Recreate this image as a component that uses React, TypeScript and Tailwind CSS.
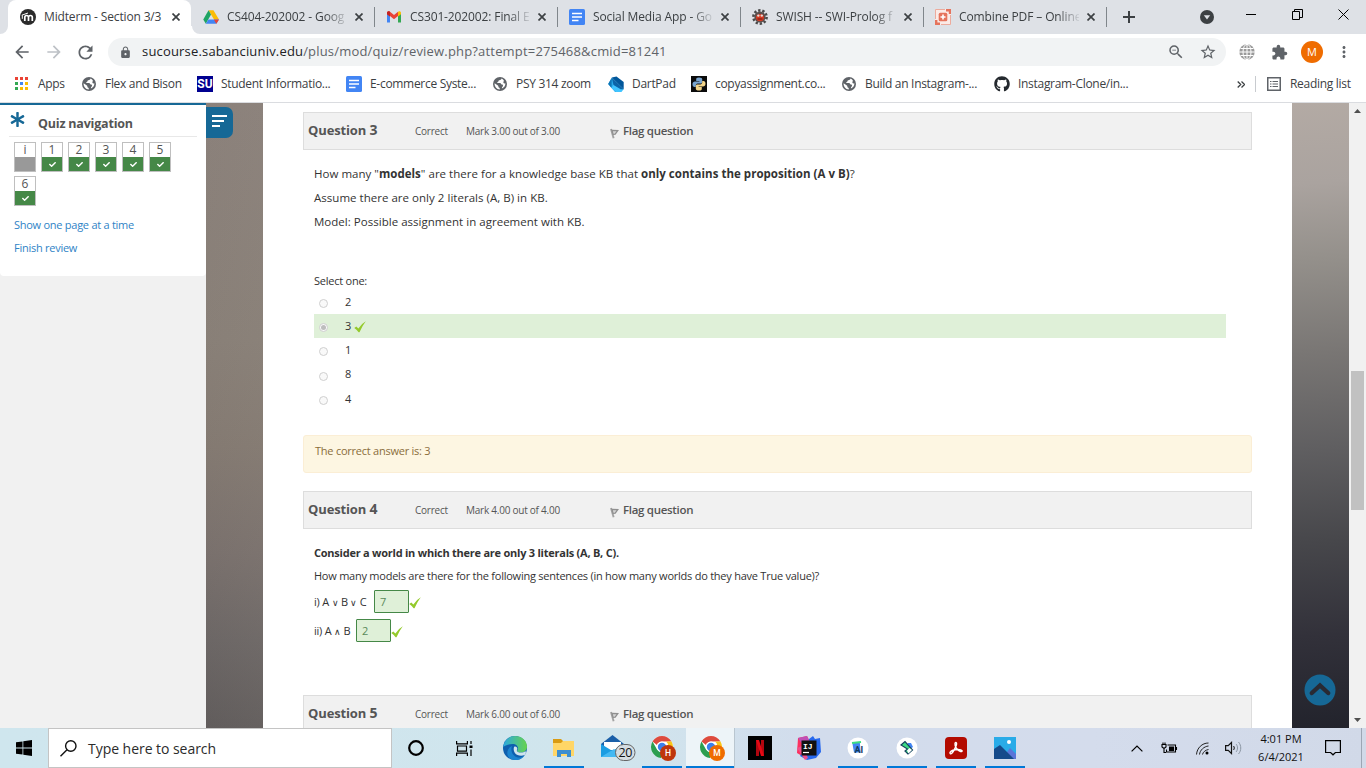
import React from "react";
import { FaAsterisk, FaGithub, FaCheck } from "react-icons/fa";
import { MdExtension, MdLock, MdStarBorder, MdMoreVert, MdRefresh, MdArrowBack, MdArrowForward, MdZoomOut } from "react-icons/md";

type Kids = { children?: React.ReactNode };

/* ---------- small drawings ---------- */

function Moodle() {
  return (
    <svg width="16" height="16" viewBox="0 0 16 16">
      <circle cx="8" cy="8" r="8" fill="#2b2b2b" />
      <path d="M4.800 12V8.200c0-2.300 3.700-2.300 3.700 0V12M8.500 8.200c0-2.300 3.800-2.300 3.800 0V12" fill="none" stroke="#fff" strokeWidth="1.700" />
      <path d="M1.800 6.200L8 4M2.300 6.200v3.600" fill="none" stroke="#fff" strokeWidth="1" />
    </svg>
  );
}

function Drive() {
  return (
    <svg width="16" height="16" viewBox="0 0 24 24">
      <path d="M8.3 1.8h7.4L24 15.6h-7.5z" fill="#fbbc04" />
      <path d="M8.3 1.8L12 8.2 4.2 22 .4 15.6z" fill="#1fa463" />
      <path d="M8.1 15.6H24L20 22H4.2z" fill="#4285f4" />
      <path d="M16.4 15.6H24L20 22z" fill="#ea4335" />
    </svg>
  );
}

function Gmail() {
  return (
    <svg width="16" height="16" viewBox="0 0 16 16">
      <path d="M1 4v9.5h3V7z" fill="#4285f4" />
      <path d="M12 7v6.5h3V4z" fill="#34a853" />
      <path d="M1 3.8C1 2.2 3 1.8 4 2.8L8 6l4-3.2V7l-4 3.2L4 7v.5L1 5.3z" fill="#ea4335" />
      <path d="M12 2.8c1-1 3-.6 3 1v1.5L12 7.5z" fill="#fbbc04" />
      <path d="M1 3.8C1 2.4 3 1.9 4 2.8v4.7L1 5.3z" fill="#c5221f" />
    </svg>
  );
}

function Docs() {
  return (
    <svg width="16" height="16" viewBox="0 0 16 16">
      <rect width="16" height="16" rx="1.5" fill="#4285f4" />
      <path d="M3 4.5h10M3 8h10M3 11.5h6.5" stroke="#fff" strokeWidth="1.6" />
    </svg>
  );
}

function Swish() {
  return (
    <svg width="16" height="16" viewBox="0 0 16 16">
      <circle cx="8" cy="8" r="6.6" fill="none" stroke="#4a4a4a" strokeWidth="2.6" strokeDasharray="2.3 1.85" />
      <circle cx="8" cy="8" r="5.6" fill="#5b4f4d" />
      <ellipse cx="8" cy="8.6" rx="4" ry="3.6" fill="#d63a22" />
      <circle cx="6.3" cy="6.6" r="1.2" fill="#e8dcd8" />
      <circle cx="9.8" cy="6.6" r="1.2" fill="#e8dcd8" />
      <path d="M5.5 10h5" stroke="#701810" strokeWidth="1" />
    </svg>
  );
}

function Combine() {
  return (
    <svg width="16" height="16" viewBox="0 0 16 16">
      <rect width="16" height="16" fill="#fbeae6" />
      <path d="M11 0h5v5h-2.200V2.400H11zM0 11h2.400v2.600H5V16H0z" fill="#e5735c" />
      <path d="M.5 10V.5H10M6 15.500h9.500V6" fill="none" stroke="#ecab9d" />
      <rect x="3.700" y="3.700" width="8.600" height="8.600" rx="1.500" fill="#e5735c" />
      <path d="M8 5.500v5M5.500 8h5" stroke="#fff" strokeWidth="1.600" />
    </svg>
  );
}

function Globe() {
  return (
    <svg width="14" height="14" viewBox="0 0 14 14">
      <circle cx="7" cy="7" r="7" fill="#5f6368" />
      <path d="M8.600 1.600C8.300 3 7.300 3.200 6.300 3.300c-1.100.2-.6 1.600-1.700 1.800-.7.200-.5 1 .1 1h2.400c1 0 .8 1.400 1.700 1.400.8 0 1.300.4 1.200 1.200-.1.800-.8 1.100-1 1.800l-.1.900a5.500 5.500 0 0 0 3.500-5.200c-.9.400-1.800.1-2-.7-.2-.7.100-1.300.7-1.600a5.500 5.500 0 0 0-2.500-2.300zM1.600 6.200c-.3 3.200 2 6.100 5.200 6.200 0-1.200-.2-1.400-.9-1.800-.7-.5-.3-1.500-1-2.100z" fill="#fff" />
    </svg>
  );
}

function AppsGrid() {
  const dots = ["#ea4335", "#ea4335", "#ea4335", "#34a853", "#4285f4", "#fbbc04", "#34a853", "#fbbc04", "#fbbc04"];
  return (
    <svg width="14" height="14" viewBox="0 0 14 14">
      {dots.map((c, i) => (
        <rect key={i} x={(i % 3) * 5} y={Math.floor(i / 3) * 5} width="3" height="3" fill={c} />
      ))}
    </svg>
  );
}

function Dart() {
  return (
    <svg width="16" height="16" viewBox="0 0 16 16">
      <path d="M.2 8L3.800 2 15.500 13l-3.500 3H7z" fill="#29a8e8" />
      <path d="M3.800 1.500L8.500.4 15.700 6v7.200z" fill="#01579b" />
      <path d="M3.800 1.500L.2 8l3.300 4z" fill="#0d74b5" />
      <path d="M3.500 12L6 8l9.500 5.200L13.500 16H8z" fill="#40c4ff" />
      <path d="M3.800 1.500l11.900 11.700h-3L5.500 9z" fill="#0b64a8" />
    </svg>
  );
}

function Python() {
  return (
    <svg width="16" height="16" viewBox="0 0 16 16">
      <rect width="16" height="16" fill="#0b0b0b" />
      <path d="M8 1.500c-2.500 0-2.800.9-2.800 1.800V5h3.200v.6H4C2.500 5.600 1.500 6.600 1.500 8.300s.8 2.700 2 2.700h1.300V9.400c0-1 .8-1.900 1.900-1.900h3c.9 0 1.500-.7 1.500-1.500V3.300c0-1-1-1.800-3.200-1.800z" fill="#7aa5cf" />
      <path d="M8 14.500c2.500 0 2.800-.9 2.800-1.800V11H7.600v-.6H12c1.500 0 2.500-1 2.500-2.700S13.700 5 12.500 5h-1.300v1.600c0 1-.8 1.900-1.900 1.900h-3c-.9 0-1.500.7-1.500 1.500v2.700c0 1 1 1.800 3.200 1.800z" fill="#f3d58a" />
    </svg>
  );
}

function Web() {
  return (
    <svg width="16" height="16" viewBox="0 0 16 16" fill="none" stroke="#fff" strokeWidth="1">
      <circle cx="8" cy="8" r="7.700" fill="#9a9a9a" stroke="none" />
      <path d="M8 0v16M0 8h16M1.500 4.500h13M1.500 11.500h13" />
      <ellipse cx="8" cy="8" rx="4" ry="7.700" />
    </svg>
  );
}

function GreenTick() {
  return (
    <svg width="12" height="12" viewBox="0 0 12 12" className="shrink-0">
      <path d="M.3 7l2-1.600 2.100 2.200Q7 3 11.800.3 8.200 5 5.500 11.300H4.600Q3 8.800.3 7z" fill="#94ca2c" />
    </svg>
  );
}

function Flag() {
  return (
    <svg width="9" height="11" viewBox="0 0 9 11" className="shrink-0">
      <path d="M1 1l2.600 9.300" stroke="#a3a3a3" strokeWidth="1.900" />
      <path d="M2 2.300l5.800.2-2.600 3.700-2.200.2z" fill="#d5d5d5" stroke="#8f8f8f" strokeWidth="1.300" />
    </svg>
  );
}

/* ---------- browser chrome ---------- */

const CloseX = () => (
  <svg width="8" height="8" viewBox="0 0 8 8" className="shrink-0">
    <path d="M.5.5l7 7M7.500.5l-7 7" stroke="#3c4043" strokeWidth="1.700" />
  </svg>
);

function ActiveTab({ icon, children }: Kids & { icon: React.ReactNode }) {
  return (
    <div className="relative flex h-[34px] w-[183px] shrink-0 items-center rounded-t-[8px] bg-white pl-3">
      <svg width="8" height="8" viewBox="0 0 8 8" className="absolute bottom-0 -left-2"><path d="M8 0v8H0a8 8 0 0 0 8-8z" fill="#fff" /></svg>
      <svg width="9" height="8" viewBox="0 0 9 8" className="absolute -right-[9px] bottom-0"><path d="M0 0v8h9a8 8 0 0 1-8-8z" fill="#fff" /></svg>
      <span className="flex w-4 shrink-0 justify-center">{icon}</span>
      <span className="ml-2 w-[120px] shrink-0 whitespace-nowrap tracking-[-0.15px]">{children}</span>
      <span className="ml-2"><CloseX /></span>
    </div>
  );
}

function Tab({ icon, children }: Kids & { icon: React.ReactNode }) {
  return (
    <div className="flex h-[34px] w-[183px] shrink-0 items-center pl-3">
      <span className="flex w-4 shrink-0 justify-center">{icon}</span>
      <span className="ml-2 w-[120px] shrink-0 whitespace-nowrap tracking-[-0.12px] mask-[linear-gradient(90deg,#000_82%,transparent_102%)]">{children}</span>
      <span className="ml-2"><CloseX /></span>
      <span className="-mr-px ml-auto h-5 w-px bg-[#80868b]" />
    </div>
  );
}

function TabStrip() {
  return (
    <div className="flex h-[34px] bg-[#dee1e6] pl-2 text-[12px] text-[#3c4043]">
      <ActiveTab icon={<Moodle />}>Midterm - Section 3/3</ActiveTab>
      <Tab icon={<Drive />}>CS404-202002 - Goog</Tab>
      <Tab icon={<Gmail />}>CS301-202002: Final E</Tab>
      <Tab icon={<Docs />}>Social Media App - Go</Tab>
      <Tab icon={<Swish />}>SWISH -- SWI-Prolog f</Tab>
      <Tab icon={<Combine />}>Combine PDF – Online</Tab>
      <div className="flex flex-1 items-center">
        <svg width="12" height="12" viewBox="0 0 12 12" className="ml-[17px]"><path d="M6 0v12M0 6h12" stroke="#3c4043" strokeWidth="2" /></svg>
        <svg width="14" height="14" viewBox="0 0 14 14" className="ml-[65px]"><circle cx="7" cy="7" r="7" fill="#3c4043" /><path d="M3.800 5.300h6.400L7 9.500z" fill="#dee1e6" /></svg>
        <svg width="10" height="10" viewBox="0 0 10 10" className="-mt-[6px] ml-[32px]"><path d="M0 5.500h10" stroke="#000" /></svg>
        <svg width="11" height="11" viewBox="0 0 11 11" className="-mt-[6px] ml-[36px]" fill="none" stroke="#000"><path d="M.5 2.500h7v8h-7zM2.500 2.500v-2h8v8h-3" /></svg>
        <svg width="11" height="11" viewBox="0 0 11 11" className="-mt-[6px] ml-[35px]"><path d="M.5.5l10 10M10.500.5l-10 10" stroke="#000" /></svg>
      </div>
    </div>
  );
}

function Toolbar() {
  return (
    <div className="flex h-9 items-center bg-white text-[#5f6368]">
      <MdArrowBack size={20} className="ml-3" />
      <MdArrowForward size={20} className="ml-3 text-[#bdc1c6]" />
      <MdRefresh size={21} className="ml-[11px]" />
      <div className="ml-3 flex h-7 w-[1118px] items-center rounded-full bg-[#f1f3f4]">
        <MdLock size={13} className="ml-[11px] shrink-0" />
        <span className="ml-[10px] whitespace-nowrap text-[13px] tracking-[0.18px]"><span className="text-[#202124]">sucourse.sabanciuniv.edu</span>/plus/mod/quiz/review.php?attempt=275468&amp;cmid=81241</span>
        <MdZoomOut size={18} className="mr-[14px] ml-auto" />
        <MdStarBorder size={18} className="mr-[9px]" />
      </div>
      <div className="flex flex-1 items-center">
        <span className="ml-[13px]"><Web /></span>
        <MdExtension size={17} className="ml-4" />
        <span className="ml-[13px] flex size-[22px] items-center justify-center rounded-full bg-[#ef6c00] text-[11px] text-white">M</span>
        <MdMoreVert size={18} className="ml-[12px]" />
      </div>
    </div>
  );
}

function Mark({ icon, children, w }: Kids & { icon: React.ReactNode; w: string }) {
  return (
    <div className={"flex shrink-0 items-center whitespace-nowrap " + w}>
      <span className="mr-2 flex w-4 shrink-0 justify-center">{icon}</span>
      <span>{children}</span>
    </div>
  );
}

function Bookmarks() {
  return (
    <div className="flex h-[33px] items-center border-b border-[#dadce0] bg-white pb-1 pl-[14px] text-[12px] tracking-[-0.3px] text-[#3c4043]">
      <Mark w="w-[67px]" icon={<AppsGrid />}>Apps</Mark>
      <Mark w="w-[116px]" icon={<Globe />}>Flex and Bison</Mark>
      <Mark w="w-[149px]" icon={<span className="flex size-4 items-center justify-center bg-[#000090] font-['Roboto',sans-serif] text-[12px] font-bold tracking-normal text-white">SU</span>}>Student Informatio...</Mark>
      <Mark w="w-[146px]" icon={<Docs />}>E-commerce Syste...</Mark>
      <Mark w="w-[116px]" icon={<Globe />}>PSY 314 zoom</Mark>
      <Mark w="w-[83px]" icon={<Dart />}>DartPad</Mark>
      <Mark w="w-[150px]" icon={<Python />}>copyassignment.co...</Mark>
      <Mark w="w-[153px]" icon={<Globe />}>Build an Instagram-...</Mark>
      <Mark w="w-[243px]" icon={<FaGithub size={16} color="#24292e" />}>Instagram-Clone/in...</Mark>
      <svg width="8" height="7" viewBox="0 0 8 7"><path d="M.7.5l3 3-3 3M4.500.5l3 3-3 3" fill="none" stroke="#3c4043" strokeWidth="1.300" /></svg>
      <span className="ml-[10px] h-4 w-px bg-[#c8cbcf]" />
      <svg width="14" height="14" viewBox="0 0 14 14" className="mr-[9px] ml-[11px]" fill="none" stroke="#5f6368"><path d="M.75.75h12.500v12.500H.75z" strokeWidth="1.500" /><path d="M3 4.500h1.500M5.500 4.500H11M3 7h1.500M5.500 7H11M3 9.500h1.500M5.500 9.500H11" strokeWidth="1.200" /></svg>
      <span className="whitespace-nowrap">Reading list</span>
    </div>
  );
}

/* ---------- quiz page ---------- */

function NavButton({ n, done }: { n: string; done?: boolean }) {
  return (
    <div className="flex h-[30px] w-[22px] flex-col border border-[#bfbfbf] bg-white text-center text-[12px] leading-[14px] text-[#555]">
      <span className="h-[14px]">{n}</span>
      <span className={done ? "flex h-[14px] items-center justify-center bg-[#458847] text-white" : "h-[14px] bg-[#999]"}>{done && <FaCheck size={7} />}</span>
    </div>
  );
}

function Sidebar() {
  return (
    <aside className="flex w-[206px] shrink-0 flex-col bg-[#f1f1f1]">
      <div className="h-[173px] rounded-b border-t-2 border-[#166896] bg-white px-[9px]">
        <div className="flex h-8 items-center border-b border-[#e8e8e8]">
          <FaAsterisk size={15} color="#166896" className="mb-0.5 ml-px" />
          <h2 className="ml-[13px] whitespace-nowrap pt-[7px] text-[12.500px] font-bold tracking-[-0.2px] text-[#555]">Quiz navigation</h2>
        </div>
        <div className="flex w-[180px] flex-wrap gap-x-[5px] gap-y-1 pt-[5px] pl-[5px]">
          <NavButton n="i" />
          {["1", "2", "3", "4", "5", "6"].map((n) => <NavButton key={n} n={n} done />)}
        </div>
        <div className="flex flex-col pt-[7px] pl-[5px] text-[11px] leading-[23px] tracking-[-0.26px] text-[#2f83c6]">
          <a>Show one page at a time</a>
          <a>Finish review</a>
        </div>
      </div>
    </aside>
  );
}

function QHead({ n, mark }: { n: string; mark: string }) {
  return (
    <div className="-ml-[11px] flex h-[38px] w-[949px] shrink-0 items-center whitespace-nowrap border border-[#ddd] bg-[#f1f1f1] pl-1 text-[#555]">
      <h3 className="w-[107px] pb-[2px] text-[13px] font-bold tracking-[-0.13px]">Question <span className="text-[14px]">{n}</span></h3>
      <span className="w-[51px] pt-px text-[10px]">Correct</span>
      <span className="w-[144px] pt-px text-[10px]">Mark {mark} out of {mark}</span>
      <span className="pt-[4px]"><Flag /></span>
      <span className="ml-1 text-[11.500px] font-semibold tracking-[-0.3px]">Flag question</span>
    </div>
  );
}

function Option({ v, on }: { v: string; on?: boolean }) {
  return (
    <div className={on ? "flex h-[24px] w-[912px] items-center bg-[#dff0d8] pl-[5px]" : "flex h-[24.300px] w-[912px] items-center pl-[5px]"}>
      <span className="mt-[3px] flex size-[9px] items-center justify-center rounded-full border border-[#cfcfcf] bg-[#f9f9f9]">{on && <span className="size-[5px] rounded-full bg-[#bdbdbd]" />}</span>
      <span className="mr-[3px] ml-[17px]">{v}</span>
      {on && <span className="pt-0.5"><GreenTick /></span>}
    </div>
  );
}

function Blank({ children, v, w }: Kids & { v: string; w: string }) {
  return (
    <div className="flex h-[29px] items-center">
      <span className={"shrink-0 whitespace-nowrap " + w}>{children}</span>
      <span className="flex h-[23px] w-[35px] items-center rounded-[1px] border border-[#458847] bg-[#dff0d8] pl-[5px] text-[#5a8a5a]">{v}</span>
      <span className="pt-0.5"><GreenTick /></span>
    </div>
  );
}

const Op = ({ children }: Kids) => <span className="text-[9px]">{children}</span>;

function Quiz() {
  return (
    <main className="flex w-[1029px] shrink-0 flex-col overflow-hidden bg-white pt-[9px] pl-[51px] text-[11px] tracking-[-0.24px] text-[#333]">
      <QHead n="3" mark="3.00" />
      <div className="h-[108px] shrink-0 pt-[12px] text-[11.500px] leading-[24px] tracking-[0.025px]">
        <p>How many "<b>models</b>" are there for a knowledge base KB that <b>only contains the proposition (A v B)</b>?</p>
        <p>Assume there are only 2 literals (A, B) in KB.</p>
        <p>Model: Possible assignment in agreement with KB.</p>
      </div>
      <div className="flex h-[177px] shrink-0 flex-col pt-[13px]">
        <p className="h-[19px] leading-[20px]">Select one:</p>
        <Option v="2" />
        <Option v="3" on />
        <Option v="1" />
        <Option v="8" />
        <Option v="4" />
      </div>
      <div className="-ml-[11px] h-[38px] w-[949px] shrink-0 rounded-[3px] border border-[#fbeed5] bg-[#fdf6e2] pt-[7px] pl-[11px] text-[#8a6d3b]">The correct answer is: 3</div>
      <div className="h-[18px] shrink-0" />
      <QHead n="4" mark="4.00" />
      <div className="h-[166px] shrink-0 pt-[12px] leading-[23px]">
        <p className="font-bold">Consider a world in which there are only 3 literals (A, B, C).</p>
        <p>How many models are there for the following sentences (in how many worlds do they have True value)?</p>
        <Blank w="w-[60px]" v="7">i) A <Op>∨</Op> B <Op>∨</Op> C</Blank>
        <Blank w="w-[42px]" v="2">ii) A <Op>∧</Op> B</Blank>
      </div>
      <QHead n="5" mark="6.00" />
    </main>
  );
}

function Page() {
  return (
    <div className="flex h-[625px] overflow-hidden">
      <Sidebar />
      <div className="w-[57px] shrink-0 bg-[linear-gradient(100deg,transparent,#a59d9230),linear-gradient(180deg,#8b817b,#877e76_38%,#81776f_55%,#756c69_72%,#656060_86%,#575354)] pt-1">
        <div className="flex h-[31px] w-[27px] flex-col gap-[2px] rounded-r-[7px] bg-[#166896] pt-[8px] pl-[6px]">
          <span className="h-[2px] w-[15px] bg-white" />
          <span className="mt-px h-[2px] w-[12px] bg-white" />
          <span className="mt-px h-[2px] w-[8px] bg-white" />
        </div>
      </div>
      <Quiz />
      <div className="flex w-[57px] shrink-0 flex-col items-center justify-end bg-[linear-gradient(176deg,#b3aaa4,#aaa39f_13%,#94908b_25%,#797674_40%,#605f61_55%,#47474b_70%,#32313a_85%,#22232c)] pr-px pb-[22px]">
        <svg width="32" height="32" viewBox="0 0 32 32"><circle cx="16" cy="16" r="15.500" fill="#166896" /><path d="M7.800 19L16 11.500l8.200 7.500" fill="none" stroke="#292a33" strokeWidth="4.400" strokeLinejoin="miter" strokeLinecap="round" /></svg>
      </div>
      <div className="flex w-[17px] shrink-0 flex-col items-center bg-[#f1f1f1] pt-[6px] pb-[6px]">
        <svg width="7" height="4" viewBox="0 0 7 4"><path d="M3.500 0L7 4H0z" fill="#505050" /></svg>
        <div className="mt-[258px] h-[139px] w-[13px] bg-[#c1c1c1]" />
        <svg width="7" height="4" viewBox="0 0 7 4" className="mt-auto"><path d="M3.500 4L0 0h7z" fill="#505050" /></svg>
      </div>
    </div>
  );
}

/* ---------- taskbar ---------- */

function Chrome({ letter, color }: { letter: string; color: string }) {
  return (
    <svg width="26" height="26" viewBox="0 0 26 26">
      <circle cx="12" cy="12" r="11" fill="#fff" />
      <path d="M2.500 6.500A11 11 0 0 1 21.500 6.500H12a5.500 5.500 0 0 0-5 3.500z" fill="#dd4b3e" />
      <path d="M2.500 6.500A11 11 0 0 0 11 23l5-8a5.500 5.500 0 0 1-9-.5z" fill="#2c9e50" />
      <path d="M21.500 6.500A11 11 0 0 1 11 23l5.500-8a5.500 5.500 0 0 0-.5-8.500z" fill="#f9c61a" />
      <circle cx="12" cy="12" r="5.400" fill="#fff" />
      <circle cx="12" cy="12" r="4.200" fill="#3b80ed" />
      <circle cx="18" cy="18" r="8" fill={color} />
      <text x="18" y="21" textAnchor="middle" fontSize="8.500" fontFamily="Roboto" fill="#fff" fontWeight="500">{letter}</text>
    </svg>
  );
}

function Task({ children, run, active }: Kids & { run?: boolean; active?: boolean }) {
  return (
    <div className={active ? "flex h-10 w-[49px] shrink-0 flex-col border-r border-[#b9c6d0] bg-[#edf4f8]" : "flex h-10 w-[49px] shrink-0 flex-col"}>
      <div className="flex h-[38px] items-center justify-center pt-0.5">{children}</div>
      {run && <div className={active ? "h-[2px] w-[48px] bg-[#0078d7]" : "mx-auto h-[2px] w-[40px] bg-[#0078d7]"} />}
    </div>
  );
}

function Taskbar() {
  return (
    <div className="flex h-10 bg-[linear-gradient(90deg,#cfe6ee,#d0e5ed_45%,#d2dcec_60%,#d4dcec_80%,#d1d9e8)]">
      <div className="flex w-12 items-center justify-center">
        <svg width="16" height="16" viewBox="0 0 16 16"><path d="M0 2.300L6.500 1.400v6.100H0zM7.300 1.200L16 0v7.500H7.300zM0 8.400h6.500v6.200L0 13.700zM7.300 8.400H16V16l-8.700-1.200z" /></svg>
      </div>
      <div className="flex w-[344px] items-center border border-[#c4c4c4] bg-white">
        <svg width="17" height="17" viewBox="0 0 17 17" className="ml-[11px]" fill="none" stroke="#111" strokeWidth="1.400"><circle cx="10.800" cy="6" r="5.200" /><path d="M7 9.700L.5 16.300" /></svg>
        <span className="ml-[11px] whitespace-nowrap text-[14px] tracking-[-0.04px] text-[#2b2b2b]">Type here to search</span>
      </div>
      <Task><svg width="16" height="16" viewBox="0 0 16 16" className="mr-px"><circle cx="8" cy="8" r="6.800" fill="none" stroke="#000" strokeWidth="2.200" /></svg></Task>
      <Task><svg width="17" height="15" viewBox="0 0 17 15" className="mr-[3px]" fill="none" stroke="#000" strokeWidth="1.200"><path d="M.6 0v2.800h10.800V0M.6 15v-2.800h10.800V15M1.500 5h9v5.200h-9zM15 0v3M15 8.500V15" /><path d="M15 4.500v2.500" strokeWidth="3" /></svg></Task>
      <Task>
        <svg width="24" height="24" viewBox="0 0 24 24">
          <defs><linearGradient id="eg" x1="0" x2="1"><stop offset="0" stopColor="#2ba9e0" /><stop offset="1" stopColor="#67d34c" /></linearGradient></defs>
          <circle cx="12" cy="12" r="12" fill="#0e5fae" />
          <path d="M.3 11C1 4 6.500 0 12 0c7 0 12 5 12 10.500 0 4-3 6-6.500 6-3 0-4-1-3-2.500C16 11.500 14 8 9.500 8 5 8 1.500 9.500.3 11z" fill="url(#eg)" />
          <path d="M9 10c-2 5 1 10.500 6 11.500 2 .4 4.500-.5 6.500-2-3.500 5.500-11 6-15.500 2C3 18.500 4 12 9 10z" fill="#1b84cf" />
          <path d="M11 11c1.500-1.200 3.500.3 3.300 2-1 1.500-.5 3 2.200 3.500 2.500.3 4.500-.3 6-1.500l.5 2-1.300 2c-3.500 1.500-8 .5-9.800-2-1.200-2-1.500-4-.9-6z" fill="#d0e5ed" />
        </svg>
      </Task>
      <Task run>
        <svg width="22" height="20" viewBox="0 0 22 20"><path d="M0 1h8l2 2v3H0z" fill="#d99b13" /><path d="M0 5h8l2-2h11v15H0z" fill="#ffd667" /><path d="M4 19v-7h14v7h-4v-3H8v3z" fill="#3d8fd0" /></svg>
      </Task>
      <Task>
        <svg width="36" height="28" viewBox="0 0 36 28" className="ml-[10px]">
          <path d="M1 10L12.500 1 24 10v12H1z" fill="#1a5fa8" /><path d="M4 8h17v8H4z" fill="#fff" /><path d="M1 10l11.500 7L24 10v13H1z" fill="#1b9de2" /><path d="M1 23l13-8 10 8z" fill="#45b9f2" />
          <rect x="15.500" y="10.500" width="19.500" height="16" rx="8" fill="#d5dde2" stroke="#666" />
          <text x="25.300" y="23" fontSize="12.500" textAnchor="middle" fontFamily="Open Sans" fontWeight="500" letterSpacing="-.3" fill="#111">20</text>
        </svg>
      </Task>
      <Task run><span className="ml-[3px]"><Chrome letter="H" color="#bf360c" /></span></Task>
      <Task run active><span className="ml-[3px]"><Chrome letter="M" color="#ef6c00" /></span></Task>
      <Task><svg width="24" height="24" viewBox="0 0 24 24"><rect width="24" height="24" fill="#000" /><path d="M8 4h3v16H8zM13 4h3v16h-3z" fill="#b1060f" /><path d="M8 4h3l5 16h-3z" fill="#e50914" /></svg></Task>
      <Task>
        <svg width="24" height="24" viewBox="0 0 24 24"><path d="M1 2l9-2 3 6-8 14-5-3z" fill="#fc315f" /><path d="M12 3l4-3 2 3 5-1 1 14-5 6-9 2-7-4z" fill="#2869ed" /><path d="M0 12l5-2 6 12-3 2z" fill="#f0508a" /><path d="M1 2l9-2 3 6-6 5z" fill="#c04fb5" /><rect x="4.500" y="4.500" width="15" height="15" fill="#111" /><text x="6" y="12.500" fontSize="8" fontFamily="Liberation Mono" fontWeight="700" fill="#fff">IJ</text><path d="M6 16.500h6" stroke="#fff" strokeWidth="1.200" /></svg>
      </Task>
      <Task run><svg width="22" height="22" viewBox="0 0 22 22"><circle cx="11" cy="11" r="10.500" fill="#fff" /><path d="M5.500 7c2-2.500 6-2.500 7.500-.5l.5 9H7z" fill="#4285f4" /><path d="M5 6l9-1" stroke="#3ddc84" strokeWidth="2" /><text x="7.500" y="16" fontSize="9" fontFamily="Roboto" fontWeight="700" fill="#123a5c">AI</text></svg></Task>
      <Task run><svg width="22" height="22" viewBox="0 0 22 22"><circle cx="11" cy="11" r="10.500" fill="#fff" /><path d="M11.500 6h3.500l2 4-3 2z" fill="#4285f4" /><path d="M5 8l4-3.500 7.500 8.500-4.500 4-3-3 2.500-2z" fill="#3ddc84" stroke="#16435f" strokeWidth="1.200" /><path d="M11 13.500l2.500-2.500 2.500 2-3.500 3.500z" fill="#fff" /></svg></Task>
      <Task run><svg width="22" height="22" viewBox="0 0 22 22"><rect width="22" height="22" rx="4" fill="#b30b00" /><path d="M5 15.500c2-3 5.500-3 8-3 5 0 5 2.500 2.500 2S9.500 10 10 6.500c.5-2 2-1 1.500 1S7.500 17.500 5.500 16.800c-.5-.3-.6-.8-.5-1.300z" fill="none" stroke="#fff" strokeWidth="1.400" /></svg></Task>
      <Task run><svg width="22" height="22" viewBox="0 0 22 22"><rect width="22" height="22" fill="#29abe8" /><path d="M8 22l8-11 6 6v5z" fill="#5b74d8" /><path d="M0 12l6-4 14 14H0z" fill="#154a8a" /><circle cx="15" cy="5" r="2" fill="#fff" /></svg></Task>
      <div className="flex flex-1 items-center">
        <svg width="12" height="7" viewBox="0 0 12 7" className="ml-[102px]"><path d="M.6 6.400L6 1l5.400 5.400" fill="none" stroke="#000" strokeWidth="1.200" /></svg>
        <svg width="17" height="13" viewBox="0 0 17 13" className="ml-[18px]" fill="none" stroke="#000" strokeWidth="1.100"><path d="M6.500 3h8v7h-9V7.500M15.500 5v3" /><path d="M8.500 5h4v3.500h-4z" fill="#000" /><path d="M1 2.500h4V5L3 6.500 1 5zM2 .5v2M4 .5v2M3 6.500v4h2" /></svg>
        <svg width="13" height="13" viewBox="0 0 13 13" className="ml-[18px]" fill="none" stroke="#222"><path d="M.5 12.500C1 6 6 1 12.500 1M3.500 12.500C4 8 8 4.500 12.500 4M6.500 12.500c.5-2.500 3-4.500 6-5" /><circle cx="11" cy="11" r="1.500" fill="#000" stroke="none" /></svg>
        <svg width="17" height="14" viewBox="0 0 17 14" className="ml-4" fill="none" stroke="#111"><path d="M.6 4.700h2.600L6.500 1.500v11L3.200 9.300H.6z" strokeWidth="1.200" /><path d="M8.500 5c1 1 1 3 0 4" /><path d="M11 3c2 2 2 6 0 8M13.500 1c3 3.500 3 8.500 0 12" stroke="#8b96a3" /></svg>
        <div className="ml-[13px] flex w-[52px] flex-col items-center whitespace-nowrap text-[11px] leading-[18px] text-[#111]"><span>4:01 PM</span><span>6/4/2021</span></div>
        <svg width="16" height="16" viewBox="0 0 16 16" className="ml-[18px]" fill="none" stroke="#000" strokeWidth="1.200"><path d="M.6.600h14.800v11.900h-5L8 14.800l-2.400-2.300h-5z" /></svg>
        <span className="mr-1 ml-auto h-10 w-px bg-[#9ca6b4]" />
      </div>
    </div>
  );
}

export default function App() {
  return (
    <div className="flex h-[768px] w-[1366px] flex-col overflow-hidden bg-white font-['Open_Sans','Noto_Sans',sans-serif]">
      <TabStrip />
      <Toolbar />
      <Bookmarks />
      <Page />
      <Taskbar />
    </div>
  );
}
